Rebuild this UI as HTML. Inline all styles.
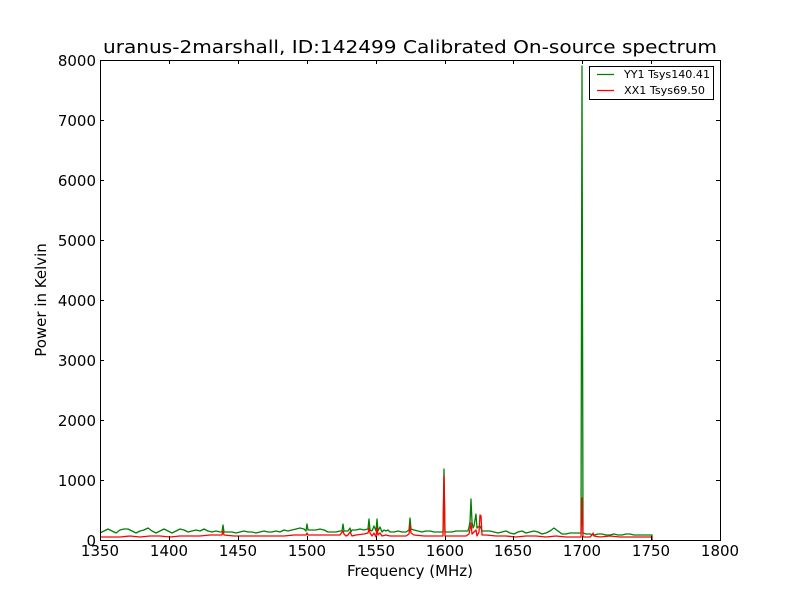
<!DOCTYPE html>
<html><head><meta charset="utf-8"><style>
body{margin:0;background:#fff;}
svg{display:block;font-family:"DejaVu Sans","Liberation Sans",sans-serif;}
</style></head><body>
<svg width="800" height="600" viewBox="0 0 800 600" xmlns="http://www.w3.org/2000/svg">
<rect width="800" height="600" fill="#fff"/>
<text x="103" y="53" font-size="18" textLength="614" lengthAdjust="spacingAndGlyphs" fill="#000">uranus-2marshall, ID:142499 Calibrated On-source spectrum</text>
<g fill="none" stroke-width="1.3" stroke-linejoin="round">
<polyline stroke="#008000" points="100,533 104,531 108,529 112,531 116,533 120,530 124,529 128,529 132,531 136,533 140,531 144,530 148,528 152,531 156,533 160,531 164,529 168,531 172,533 176,531 180,529 184,530 188,532 192,531 196,530 200,531 204,529 208,531 212,532 216,531 220,532 222,532 223,525 224,532 228,532 232,532 236,533 240,532 244,531 248,532 252,532 256,533 260,532 264,531 268,532 272,532 276,531 280,532 284,530 288,531 292,530 296,529 300,528 304,529 306,531 307,524 308,530 312,530 316,530 320,529 324,530 328,532 332,532 336,532 340,531 342,531 343,524 344,531 348,531 350,528 351,532 352,530 356,530 360,529 364,530 368,529 369,519 370,530 372,531 374,526 376,531 377,519 378,531 380,527 382,532 384,530 386,531 388,530 390,532 394,532 398,531 402,532 406,532 409,530 410,518 411,529 414,530 418,531 422,532 426,531 430,531 434,532 438,532 440,532 443,532 444,469 445,532 448,532 452,532 456,531 460,531 464,531 468,531 469,527 470,522 471,499 472,522 473,528 474,526 476,514 477,528 478,527 480,526 482,531 486,531 490,531 494,532 498,533 502,532 506,531 510,533 514,534 518,532 522,531 526,533 530,532 534,531 538,532 542,534 546,533 550,531 554,528 558,531 562,534 566,534 570,533 574,533 578,533 580,533 581,533 582,66 583,533 586,534 590,534 594,535 598,534 602,534 606,535 610,535 614,534 618,535 622,535 626,534 630,534 634,535 638,535 642,535 646,535 650,535 652,535 652,540"/>
<polyline stroke="#ff0000" points="100,537 110,537 120,537 130,536 140,537 150,536 160,536 170,537 180,536 190,536 200,536 210,535 220,535 222,535 223,531 224,535 234,536 244,536 254,536 264,536 274,536 284,536 294,535 304,535 306,535 307,533 308,535 318,535 328,535 336,535 340,535 343,531 344,534 346,536 348,535 350,532 352,536 356,535 364,534 368,533 369,528 370,533 372,536 374,533 376,537 377,528 378,535 380,533 382,536 386,535 390,536 398,536 406,536 409,534 410,525 411,533 414,535 424,536 434,536 440,536 443,536 444,476 445,536 450,536 460,536 466,536 469,534 470,529 471,523 472,534 474,532 476,530 477,536 479,532 480,515 481,516 482,535 486,535 496,536 506,536 516,537 526,536 536,536 546,537 556,536 566,537 574,537 580,537 581,537 582,498 583,537 590,537 592,535 593,533 594,536 600,537 610,536 620,537 630,537 640,537 650,537 652,537 652,540"/>
</g>
<rect x="100.5" y="60.5" width="620" height="480" fill="none" stroke="#000" stroke-width="1"/>
<g stroke="#000" stroke-width="1">
<path d="M100.5,540v-4M169.5,540v-4M238.5,540v-4M307.5,540v-4M376.5,540v-4M445.5,540v-4M513.5,540v-4M582.5,540v-4M651.5,540v-4
M100.5,60v4M169.5,60v4M238.5,60v4M307.5,60v4M376.5,60v4M445.5,60v4M513.5,60v4M582.5,60v4M651.5,60v4
M100,480.5h4M100,420.5h4M100,360.5h4M100,300.5h4M100,240.5h4M100,180.5h4M100,120.5h4
M720,480.5h-4M720,420.5h-4M720,360.5h-4M720,300.5h-4M720,240.5h-4M720,180.5h-4M720,120.5h-4"/>
</g>
<g font-size="15" fill="#000" text-anchor="middle">
<text x="100" y="556">1350</text><text x="169" y="556">1400</text><text x="238" y="556">1450</text><text x="307" y="556">1500</text><text x="376" y="556">1550</text><text x="445" y="556">1600</text><text x="513" y="556">1650</text><text x="582" y="556">1700</text><text x="651" y="556">1750</text><text x="720" y="556">1800</text>
</g>
<g font-size="15" fill="#000" text-anchor="end">
<text x="96" y="546">0</text><text x="96" y="486">1000</text><text x="96" y="426">2000</text><text x="96" y="366">3000</text><text x="96" y="306">4000</text><text x="96" y="246">5000</text><text x="96" y="186">6000</text><text x="96" y="126">7000</text><text x="96" y="66">8000</text>
</g>
<text x="410" y="576" font-size="15" text-anchor="middle">Frequency (MHz)</text>
<text transform="translate(46,300) rotate(-90)" font-size="15" text-anchor="middle">Power in Kelvin</text>
<rect x="589.5" y="66.5" width="124" height="33" fill="#fff" stroke="#000" stroke-width="1"/>
<line x1="597" y1="74.5" x2="614" y2="74.5" stroke="#008000" stroke-width="1.3"/>
<line x1="597" y1="90.5" x2="614" y2="90.5" stroke="#ff0000" stroke-width="1.3"/>
<text x="624" y="78" font-size="10.5" textLength="86" lengthAdjust="spacingAndGlyphs">YY1 Tsys140.41</text>
<text x="624" y="94" font-size="10.5" textLength="81" lengthAdjust="spacingAndGlyphs">XX1 Tsys69.50</text>
</svg>
</body></html>
